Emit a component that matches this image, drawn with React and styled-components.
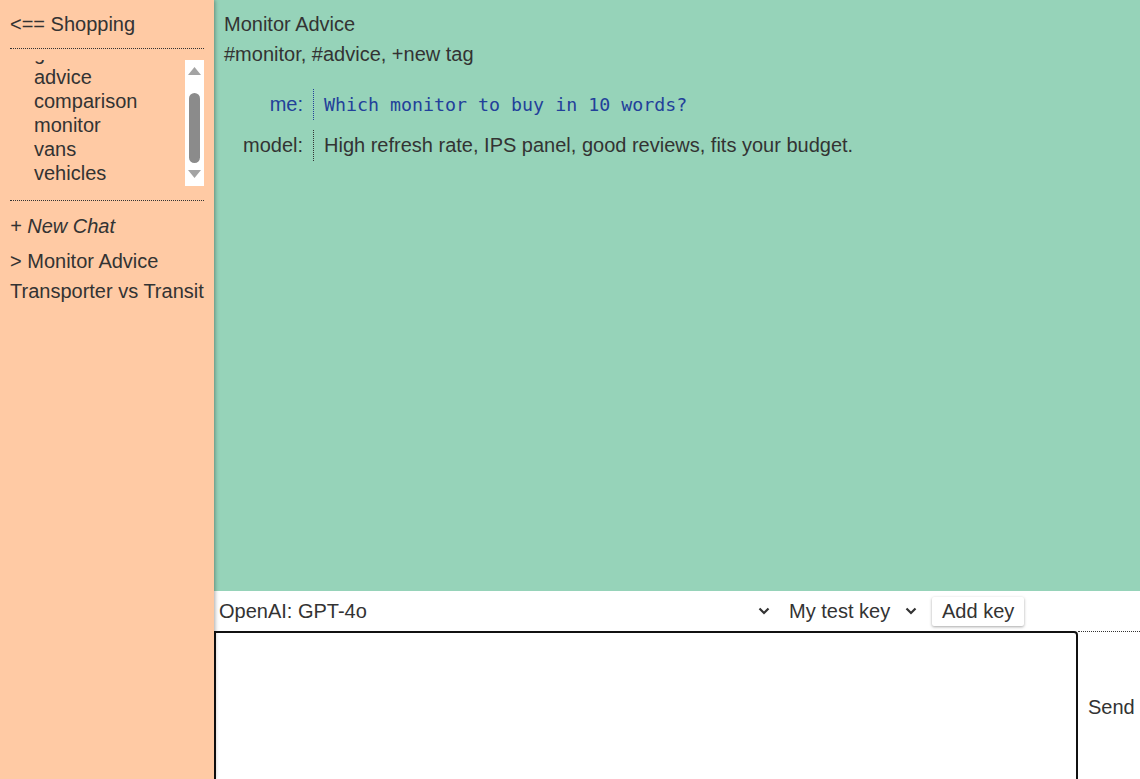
import React, { useLayoutEffect, useRef } from "react";
import styled, { createGlobalStyle } from "styled-components";

const GlobalStyle = createGlobalStyle`
  html, body {
    margin: 0;
    padding: 0;
    overflow: hidden;
  }
  body {
    font-family: "Liberation Sans", Arial, sans-serif;
    font-size: 20px;
    color: #333;
  }
`;

const Page = styled.div`
  display: grid;
  grid-template-columns: 214px 1fr;
  height: 100vh;
  overflow: hidden;
`;

const Sidebar = styled.aside`
  position: relative;
  z-index: 1;
  background: #ffcaa4;
  box-shadow: 1px 0 4px rgba(0, 0, 0, 0.35);
  padding: 12px 10px 0;
  display: flex;
  flex-direction: column;
`;

const FolderTitle = styled.div`
  line-height: 24px;
  padding-bottom: 12px;
  border-bottom: 1px dotted #333;
`;

const TagBox = styled.div`
  display: flex;
  height: 126px;
  margin-top: 11px;
  padding-bottom: 14px;
  border-bottom: 1px dotted #333;
`;

const TagList = styled.ul`
  flex: 1;
  list-style: none;
  margin: 0;
  padding: 0 0 1px 24px;
  height: 126px;
  box-sizing: border-box;
  overflow: hidden;
`;

const Tag = styled.li`
  line-height: 24px;
`;

const ScrollTrack = styled.div`
  width: 19px;
  background: #fff;
  display: flex;
  flex-direction: column;
  align-items: center;
  padding: 7px 0 8px;
  box-sizing: border-box;
`;

const Thumb = styled.div`
  width: 11px;
  height: 70px;
  margin: 18px 0 7px;
  border-radius: 6px;
  background: #8b8b8b;
`;

const ChatLinks = styled.nav`
  display: flex;
  flex-direction: column;
  margin-top: 10px;
`;

const ChatLink = styled.a`
  line-height: 24px;
  padding: 3px 0;
  color: #333;
  text-decoration: none;
  white-space: nowrap;
  font-style: ${(p) => (p.$new ? "italic" : "normal")};
  margin-bottom: ${(p) => (p.$new ? "5px" : "0")};
`;

const Main = styled.main`
  display: flex;
  flex-direction: column;
  min-width: 0;
  min-height: 0;
`;

const Conversation = styled.section`
  flex: 1;
  min-height: 0;
  background: #96d3b9;
  padding: 9px 10px 0;
`;

const ChatTitle = styled.div`
  line-height: 30px;
`;

const Tags = styled.div`
  line-height: 30px;
`;

const Messages = styled.div`
  display: grid;
  grid-template-columns: 89px 1fr;
  row-gap: 10px;
  margin-top: 20px;
`;

const Who = styled.div`
  text-align: right;
  padding: 4px 10px 4px 0;
  line-height: 23px;
  color: ${(p) => (p.$me ? "#22409a" : "#333")};
`;

const Said = styled.div`
  padding: 4px 0 4px 10px;
  line-height: 23px;
  border-left: 1px dotted ${(p) => (p.$me ? "#22409a" : "#333")};
  color: ${(p) => (p.$me ? "#22409a" : "#333")};
  font-family: ${(p) =>
    p.$me ? '"DejaVu Sans Mono", "Liberation Mono", monospace' : "inherit"};
  font-size: ${(p) => (p.$me ? "18.3px" : "20px")};
`;

const Toolbar = styled.div`
  flex: 0 0 40px;
  background: #fff;
  display: flex;
  align-items: center;
`;

const Picker = styled.label`
  display: flex;
  align-items: center;
  width: ${(p) => p.$width}px;
  margin-left: ${(p) => p.$offset || 0}px;
  svg {
    flex: none;
    margin-right: 6px;
  }
`;

const Select = styled.select`
  appearance: none;
  flex: 1;
  min-width: 0;
  border: none;
  outline: none;
  background: transparent;
  font: inherit;
  color: #333;
  padding: 0 5px;
`;

const AddKey = styled.button`
  margin-left: 9px;
  height: 29px;
  padding: 0 10px;
  border: none;
  border-radius: 2px;
  background: #fff;
  box-shadow: 0 1px 3px rgba(0, 0, 0, 0.35);
  font: inherit;
  color: #333;
`;

const Composer = styled.div`
  flex: 0 0 148px;
  min-height: 0;
  display: flex;
  align-items: flex-start;
  background: #fff;
`;

const Prompt = styled.textarea`
  flex: none;
  width: 864px;
  height: 160px;
  box-sizing: border-box;
  border: 2px solid #111;
  border-radius: 0 4px 0 0;
  resize: none;
  outline: none;
  font: inherit;
  padding: 4px;
`;

const Send = styled.button`
  flex: 1;
  align-self: stretch;
  border: none;
  border-top: 1px dotted #333;
  background: #fff;
  font: inherit;
  color: #333;
  text-align: left;
  padding: 4px 0 0 10px;
`;

const Arrow = ({ down }) => (
  <svg width="13" height="8" viewBox="0 0 13 8">
    <polygon
      points={down ? "0,0 13,0 6.5,8" : "0,8 13,8 6.5,0"}
      fill="#a3a3a3"
    />
  </svg>
);

const Chevron = () => (
  <svg width="12" height="8" viewBox="0 0 12 8">
    <polyline
      points="1.5,1.5 6,6 10.5,1.5"
      fill="none"
      stroke="#333"
      strokeWidth="2.2"
    />
  </svg>
);

const tags = ["gear", "advice", "comparison", "monitor", "vans", "vehicles"];

export default function App() {
  const listRef = useRef(null);

  useLayoutEffect(() => {
    const el = listRef.current;
    if (el) el.scrollTop = el.scrollHeight;
  }, []);

  return (
    <>
      <GlobalStyle />
      <Page>
        <Sidebar>
          <FolderTitle>&lt;== Shopping</FolderTitle>
          <TagBox>
            <TagList ref={listRef}>
              {tags.map((t) => (
                <Tag key={t}>{t}</Tag>
              ))}
            </TagList>
            <ScrollTrack>
              <Arrow />
              <Thumb />
              <Arrow down />
            </ScrollTrack>
          </TagBox>
          <ChatLinks>
            <ChatLink href="#" $new>+ New Chat</ChatLink>
            <ChatLink href="#">&gt; Monitor Advice</ChatLink>
            <ChatLink href="#">Transporter vs Transit</ChatLink>
          </ChatLinks>
        </Sidebar>

        <Main>
          <Conversation>
            <ChatTitle>Monitor Advice</ChatTitle>
            <Tags>#monitor, #advice, +new tag</Tags>
            <Messages>
              <Who $me>me:</Who>
              <Said $me>Which monitor to buy in 10 words?</Said>
              <Who>model:</Who>
              <Said>High refresh rate, IPS panel, good reviews, fits your budget.</Said>
            </Messages>
          </Conversation>

          <Toolbar>
            <Picker $width={562}>
              <Select defaultValue="gpt-4o">
                <option value="gpt-4o">OpenAI: GPT-4o</option>
              </Select>
              <Chevron />
            </Picker>
            <Picker $width={139} $offset={8}>
              <Select defaultValue="test">
                <option value="test">My test key</option>
              </Select>
              <Chevron />
            </Picker>
            <AddKey>Add key</AddKey>
          </Toolbar>

          <Composer>
            <Prompt />
            <Send>Send</Send>
          </Composer>
        </Main>
      </Page>
    </>
  );
}
